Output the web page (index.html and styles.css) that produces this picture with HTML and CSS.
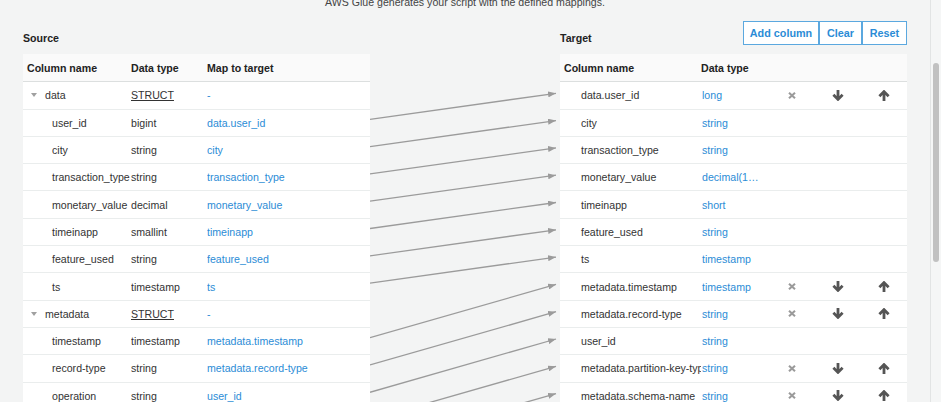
FILE: index.html
```html
<!DOCTYPE html>
<html lang="en">
<head>
<meta charset="utf-8">
<title>Map source to target</title>
<link rel="stylesheet" href="styles.css">
</head>
<body>
<div class="page">
  <div class="main">
    <p class="intro">AWS Glue generates your script with the defined mappings.</p>
    <div class="mapper">
      <section class="panel">
        <div class="panel-head"><h2 class="panel-title">Source</h2></div>
        <div class="table">
          <div class="row src head"><div class="cell c1">Column name</div><div class="cell">Data type</div><div class="cell">Map to target</div></div>
          <div class="row src"><div class="cell c1 struct"><span class="caret"></span>data</div><div class="cell"><span class="struct-type">STRUCT</span></div><div class="cell link">-</div></div>
          <div class="row src"><div class="cell c1 child">user_id</div><div class="cell">bigint</div><div class="cell link">data.user_id</div></div>
          <div class="row src"><div class="cell c1 child">city</div><div class="cell">string</div><div class="cell link">city</div></div>
          <div class="row src"><div class="cell c1 child">transaction_type</div><div class="cell">string</div><div class="cell link">transaction_type</div></div>
          <div class="row src"><div class="cell c1 child">monetary_value</div><div class="cell">decimal</div><div class="cell link">monetary_value</div></div>
          <div class="row src"><div class="cell c1 child">timeinapp</div><div class="cell">smallint</div><div class="cell link">timeinapp</div></div>
          <div class="row src"><div class="cell c1 child">feature_used</div><div class="cell">string</div><div class="cell link">feature_used</div></div>
          <div class="row src"><div class="cell c1 child">ts</div><div class="cell">timestamp</div><div class="cell link">ts</div></div>
          <div class="row src"><div class="cell c1 struct"><span class="caret"></span>metadata</div><div class="cell"><span class="struct-type">STRUCT</span></div><div class="cell link">-</div></div>
          <div class="row src"><div class="cell c1 child">timestamp</div><div class="cell">timestamp</div><div class="cell link">metadata.timestamp</div></div>
          <div class="row src"><div class="cell c1 child">record-type</div><div class="cell">string</div><div class="cell link">metadata.record-type</div></div>
          <div class="row src"><div class="cell c1 child">operation</div><div class="cell">string</div><div class="cell link">user_id</div></div>
          <div class="row src"><div class="cell c1 child">partition-key-type</div><div class="cell">string</div><div class="cell link">metadata.partition-key-type</div></div>
        </div>
      </section>

      <div class="links">
        <svg class="links-svg" width="190" height="381" viewBox="0 0 190 381">
          <defs>
            <marker id="ah" markerWidth="8" markerHeight="6" refX="8" refY="3" orient="auto" markerUnits="userSpaceOnUse">
              <path d="M0,0 L8,3 L0,6 z" fill="#9b9b9b"/>
            </marker>
          </defs>
          <g stroke="#9b9b9b" stroke-width="1.3" fill="none" marker-end="url(#ah)">
            <line x1="0" y1="98.3" x2="186" y2="72.3"/>
            <line x1="0" y1="125.6" x2="186" y2="99.6"/>
            <line x1="0" y1="152.9" x2="186" y2="126.9"/>
            <line x1="0" y1="180.2" x2="186" y2="154.2"/>
            <line x1="0" y1="207.5" x2="186" y2="181.5"/>
            <line x1="0" y1="234.8" x2="186" y2="208.8"/>
            <line x1="0" y1="262.1" x2="186" y2="236.1"/>
            <line x1="0" y1="316.7" x2="186" y2="263.4"/>
            <line x1="0" y1="344.0" x2="186" y2="290.7"/>
            <line x1="0" y1="371.3" x2="186" y2="318.0"/>
            <line x1="0" y1="398.6" x2="186" y2="345.3"/>
            <line x1="0" y1="425.9" x2="186" y2="372.6"/>
          </g>
        </svg>
      </div>

      <section class="panel">
        <div class="panel-head">
          <h2 class="panel-title">Target</h2>
          <div class="btn-group">
            <button class="btn btn-add" type="button">Add column</button>
            <button class="btn btn-clear" type="button">Clear</button>
            <button class="btn btn-reset" type="button">Reset</button>
          </div>
        </div>
        <div class="table">
          <div class="row tgt head"><div class="cell c1">Column name</div><div class="cell">Data type</div><div class="cell"></div><div class="cell"></div><div class="cell"></div></div>

          <div class="row tgt"><div class="cell c1 child">data.user_id</div><div class="cell link ty">long</div>
            <div class="cell ic"><svg class="ico-x" width="8" height="7" viewBox="0 0 8 7"><path d="M1 0.8 L7 6.2 M7 0.8 L1 6.2" stroke="#9a9a9a" stroke-width="2.1"/></svg></div>
            <div class="cell ic"><svg class="ico-arr" width="12" height="11" viewBox="0 0 12 11"><path d="M6 0 V9 M1.4 4.8 L6 9.4 L10.6 4.8" stroke="#555" stroke-width="2.8" fill="none"/></svg></div>
            <div class="cell ic last"><svg class="ico-arr" width="12" height="11" viewBox="0 0 12 11"><path d="M6 11 V2 M1.4 6.2 L6 1.6 L10.6 6.2" stroke="#555" stroke-width="2.8" fill="none"/></svg></div></div>

          <div class="row tgt"><div class="cell c1 child">city</div><div class="cell link ty">string</div><div class="cell"></div><div class="cell"></div><div class="cell"></div></div>
          <div class="row tgt"><div class="cell c1 child">transaction_type</div><div class="cell link ty">string</div><div class="cell"></div><div class="cell"></div><div class="cell"></div></div>
          <div class="row tgt"><div class="cell c1 child">monetary_value</div><div class="cell link ty">decimal(10,2)</div><div class="cell"></div><div class="cell"></div><div class="cell"></div></div>
          <div class="row tgt"><div class="cell c1 child">timeinapp</div><div class="cell link ty">short</div><div class="cell"></div><div class="cell"></div><div class="cell"></div></div>
          <div class="row tgt"><div class="cell c1 child">feature_used</div><div class="cell link ty">string</div><div class="cell"></div><div class="cell"></div><div class="cell"></div></div>
          <div class="row tgt"><div class="cell c1 child">ts</div><div class="cell link ty">timestamp</div><div class="cell"></div><div class="cell"></div><div class="cell"></div></div>

          <div class="row tgt"><div class="cell c1 child">metadata.timestamp</div><div class="cell link ty">timestamp</div>
            <div class="cell ic"><svg class="ico-x" width="8" height="7" viewBox="0 0 8 7"><path d="M1 0.8 L7 6.2 M7 0.8 L1 6.2" stroke="#9a9a9a" stroke-width="2.1"/></svg></div>
            <div class="cell ic"><svg class="ico-arr" width="12" height="11" viewBox="0 0 12 11"><path d="M6 0 V9 M1.4 4.8 L6 9.4 L10.6 4.8" stroke="#555" stroke-width="2.8" fill="none"/></svg></div>
            <div class="cell ic last"><svg class="ico-arr" width="12" height="11" viewBox="0 0 12 11"><path d="M6 11 V2 M1.4 6.2 L6 1.6 L10.6 6.2" stroke="#555" stroke-width="2.8" fill="none"/></svg></div></div>

          <div class="row tgt"><div class="cell c1 child">metadata.record-type</div><div class="cell link ty">string</div>
            <div class="cell ic"><svg class="ico-x" width="8" height="7" viewBox="0 0 8 7"><path d="M1 0.8 L7 6.2 M7 0.8 L1 6.2" stroke="#9a9a9a" stroke-width="2.1"/></svg></div>
            <div class="cell ic"><svg class="ico-arr" width="12" height="11" viewBox="0 0 12 11"><path d="M6 0 V9 M1.4 4.8 L6 9.4 L10.6 4.8" stroke="#555" stroke-width="2.8" fill="none"/></svg></div>
            <div class="cell ic last"><svg class="ico-arr" width="12" height="11" viewBox="0 0 12 11"><path d="M6 11 V2 M1.4 6.2 L6 1.6 L10.6 6.2" stroke="#555" stroke-width="2.8" fill="none"/></svg></div></div>

          <div class="row tgt"><div class="cell c1 child">user_id</div><div class="cell link ty">string</div><div class="cell"></div><div class="cell"></div><div class="cell"></div></div>

          <div class="row tgt"><div class="cell c1 child">metadata.partition-key-type</div><div class="cell link ty">string</div>
            <div class="cell ic"><svg class="ico-x" width="8" height="7" viewBox="0 0 8 7"><path d="M1 0.8 L7 6.2 M7 0.8 L1 6.2" stroke="#9a9a9a" stroke-width="2.1"/></svg></div>
            <div class="cell ic"><svg class="ico-arr" width="12" height="11" viewBox="0 0 12 11"><path d="M6 0 V9 M1.4 4.8 L6 9.4 L10.6 4.8" stroke="#555" stroke-width="2.8" fill="none"/></svg></div>
            <div class="cell ic last"><svg class="ico-arr" width="12" height="11" viewBox="0 0 12 11"><path d="M6 11 V2 M1.4 6.2 L6 1.6 L10.6 6.2" stroke="#555" stroke-width="2.8" fill="none"/></svg></div></div>

          <div class="row tgt"><div class="cell c1 child">metadata.schema-name</div><div class="cell link ty">string</div>
            <div class="cell ic"><svg class="ico-x" width="8" height="7" viewBox="0 0 8 7"><path d="M1 0.8 L7 6.2 M7 0.8 L1 6.2" stroke="#9a9a9a" stroke-width="2.1"/></svg></div>
            <div class="cell ic"><svg class="ico-arr" width="12" height="11" viewBox="0 0 12 11"><path d="M6 0 V9 M1.4 4.8 L6 9.4 L10.6 4.8" stroke="#555" stroke-width="2.8" fill="none"/></svg></div>
            <div class="cell ic last"><svg class="ico-arr" width="12" height="11" viewBox="0 0 12 11"><path d="M6 11 V2 M1.4 6.2 L6 1.6 L10.6 6.2" stroke="#555" stroke-width="2.8" fill="none"/></svg></div></div>
        </div>
      </section>
    </div>
  </div>
  <div class="scrollbar"><div class="thumb"></div></div>
</div>
</body>
</html>
```

FILE: styles.css
```css
* { box-sizing: border-box; }

html, body {
  margin: 0;
  padding: 0;
  background: #f3f4f4;
}

body {
  font-family: "Liberation Sans", Arial, Helvetica, sans-serif;
  font-size: 10.6px;
  color: #333;
}

.page {
  display: flex;
  width: 941px;
  height: 402px;
  overflow: hidden;
}

.main {
  width: 930px;
  flex: 0 0 930px;
  padding: 0 23px;
}

.intro {
  margin: -4px 0 0;
  line-height: 13px;
  height: 13px;
  text-align: center;
  color: #444;
}

.mapper {
  margin-top: 12px;
  display: grid;
  grid-template-columns: 347px 190px 347px;
  align-items: start;
}

.panel-head {
  display: flex;
  align-items: flex-end;
  justify-content: space-between;
  height: 24px;
  margin-bottom: 9px;
}

.panel-title {
  margin: 0;
  font-size: 10.6px;
  font-weight: bold;
  line-height: 13px;
  color: #222;
}

.btn-group {
  display: flex;
  height: 24px;
}

.btn {
  height: 24px;
  padding: 0;
  border: 1px solid #5ba8df;
  background: #fff;
  color: #2b8cd6;
  font-family: inherit;
  font-size: 10.8px;
  font-weight: bold;
  text-align: center;
  cursor: pointer;
}

.btn-add { width: 76px; }
.btn-clear { width: 43px; }
.btn-reset { width: 45px; }

.table {
  background: #fff;
}

.row {
  display: grid;
  height: 27.3px;
  border-bottom: 1px solid #eaeded;
  align-items: center;
}

.row.head {
  height: 28.3px;
  background: #fafafa;
  border-bottom: 1px solid #dcdfdf;
  font-weight: bold;
  color: #222;
}

.row.src { grid-template-columns: 108px 76px 1fr; }
.row.tgt { grid-template-columns: 141px 63px 56px 36px 1fr; }

.cell {
  white-space: nowrap;
  overflow: hidden;
  line-height: 14px;
}

.c1 { padding-left: 4px; }
.row.src .c1 { padding-right: 2px; }
.row.src .c1.child { padding-left: 29px; }
.row.tgt .c1.child { padding-left: 21px; }
.row.tgt .c1 { padding-right: 2px; }

.row.src .struct {
  display: flex;
  align-items: center;
  padding-left: 8px;
}

.caret {
  flex: 0 0 auto;
  width: 0;
  height: 0;
  border-left: 3px solid transparent;
  border-right: 3px solid transparent;
  border-top: 4px solid #a0a0a0;
  margin-right: 8px;
}

.struct-type {
  text-decoration: underline;
  color: #333;
}

.link { color: #2b8cd6; }

.ty {
  padding-left: 1px;
  text-overflow: ellipsis;
}

.ic {
  display: flex;
  justify-content: center;
  align-items: center;
}

.ic.last { padding-left: 5px; }

.ico-x, .ico-arr { display: block; }

.links {
  height: 381px;
}

.links-svg { display: block; }

.scrollbar {
  flex: 0 0 11px;
  width: 11px;
  height: 402px;
  border-left: 1px solid #e2e4e4;
  background: #f5f6f6;
  padding: 63px 0 0 2px;
}

.thumb {
  width: 6px;
  height: 199px;
  border-radius: 3px;
  background: #c1c1c1;
}
```
